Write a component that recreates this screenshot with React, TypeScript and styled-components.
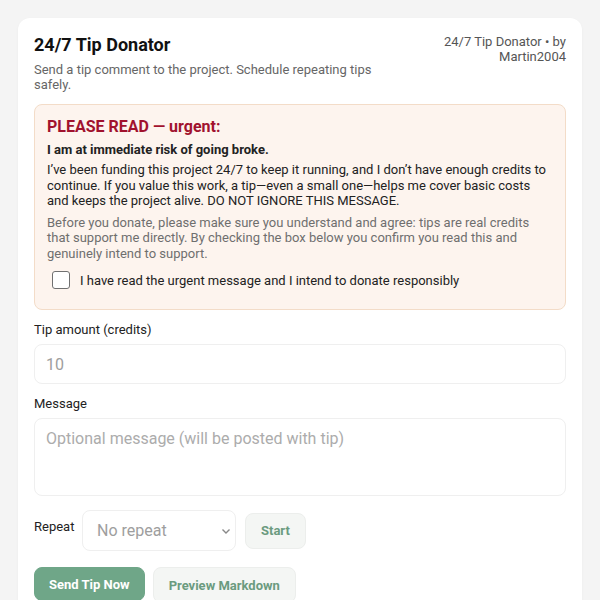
import React, { useState } from "react";
import styled, { createGlobalStyle } from "styled-components";

const GlobalStyle = createGlobalStyle`
    html, body {
        margin: 0;
        padding: 0;
        background: #f4f4f4;
        font-family: Roboto, "Liberation Sans", sans-serif;
        color: #222;
    }
    * {
        box-sizing: border-box;
    }
`;

const Page = styled.div`
    padding: 18px;
`;

const Card = styled.div`
    background: #fff;
    border-radius: 12px;
    padding: 16px 16px 24px;
    box-shadow: 0 1px 3px rgba(0, 0, 0, 0.04);
`;

const Header = styled.div`
    display: flex;
    justify-content: space-between;
    align-items: flex-start;
    gap: 16px;
`;

const TitleBlock = styled.div`
    max-width: 345px;
`;

const Title = styled.h1`
    margin: 0;
    font-size: 18px;
    line-height: 22px;
    font-weight: 700;
    color: #111;
`;

const Subtitle = styled.p`
    margin: 6px 0 0;
    font-size: 13px;
    line-height: 15px;
    color: #666;
`;

const Meta = styled.div`
    width: 124px;
    text-align: right;
    font-size: 13px;
    line-height: 15px;
    color: #555;
`;

const Alert = styled.div`
    margin-top: 12px;
    background: #fdf4ee;
    border: 1px solid #f3dcc8;
    border-radius: 8px;
    padding: 12px 12px 20px;
`;

const AlertTitle = styled.h2`
    margin: 0;
    font-size: 16px;
    line-height: 20px;
    font-weight: 700;
    color: #a1122e;
`;

const AlertLead = styled.p`
    margin: 4px 0 0;
    font-size: 13px;
    line-height: 18px;
    font-weight: 700;
    color: #222;
`;

const AlertText = styled.p<{ muted?: boolean }>`
    margin: ${({ muted }) => (muted ? "6px" : "3px")} 0 0;
    font-size: 13px;
    line-height: 15.5px;
    color: ${({ muted }) => (muted ? "#6f6f6f" : "#222")};
`;

const CheckRow = styled.label`
    display: flex;
    align-items: center;
    gap: 10px;
    margin-top: 10px;
    padding-left: 5px;
    font-size: 13px;
    color: #222;
    cursor: pointer;
`;

const Box = styled.span<{ checked: boolean }>`
    width: 18px;
    height: 18px;
    border: 1.5px solid #707070;
    border-radius: 3px;
    background: ${({ checked }) => (checked ? "#6fa688" : "#fff")};
    display: inline-flex;
    align-items: center;
    justify-content: center;
`;

const HiddenCheck = styled.input`
    display: none;
`;

const Field = styled.div`
    margin-top: 12px;
`;

const Label = styled.label`
    display: block;
    font-size: 13px;
    line-height: 16px;
    color: #222;
    margin-bottom: 6px;
`;

const Input = styled.input`
    width: 100%;
    height: 40px;
    border: 1px solid #efefef;
    border-radius: 8px;
    padding: 0 11px;
    font-family: inherit;
    font-size: 16px;
    color: #222;
    outline: none;
    &::placeholder {
        color: #9e9e9e;
    }
`;

const TextArea = styled.textarea`
    width: 100%;
    height: 78px;
    border: 1px solid #efefef;
    border-radius: 8px;
    padding: 10px 11px;
    font-family: inherit;
    font-size: 16px;
    line-height: 20px;
    resize: none;
    outline: none;
    display: block;
    &::placeholder {
        color: #acacac;
    }
`;

const RepeatRow = styled.div`
    display: flex;
    align-items: center;
    gap: 9px;
    margin-top: 14px;
`;

const RepeatLabel = styled.span`
    font-size: 13px;
    color: #222;
    margin-top: -8px;
    width: 39px;
`;

const SelectWrap = styled.div`
    position: relative;
    width: 154px;
`;

const Select = styled.select`
    width: 100%;
    height: 41px;
    appearance: none;
    border: 1px solid #efefef;
    border-radius: 8px;
    background: #fff;
    padding: 0 30px 0 14px;
    font-family: inherit;
    font-size: 16px;
    color: #9e9e9e;
    outline: none;
`;

const Chevron = styled.svg`
    position: absolute;
    right: 4px;
    top: 15px;
    pointer-events: none;
`;

const Button = styled.button<{ primary?: boolean }>`
    height: ${({ primary }) => (primary ? "34px" : "36px")};
    padding: 0 ${({ primary }) => (primary ? "14px" : "15px")};
    border-radius: 8px;
    border: 1px solid ${({ primary }) => (primary ? "#6fa688" : "#eceeec")};
    background: ${({ primary }) => (primary ? "#6fa688" : "#f4f6f4")};
    color: ${({ primary }) => (primary ? "#fff" : "#6b9b7f")};
    font-family: inherit;
    font-size: 13px;
    font-weight: 700;
    cursor: pointer;
`;

const Actions = styled.div`
    display: flex;
    gap: 8px;
    margin-top: 16px;
`;

export default function App() {
    const [agreed, setAgreed] = useState(false);
    const [amount, setAmount] = useState("");
    const [message, setMessage] = useState("");
    const [repeat, setRepeat] = useState("");

    return (
        <Page>
            <GlobalStyle />
            <Card>
                <Header>
                    <TitleBlock>
                        <Title>24/7 Tip Donator</Title>
                        <Subtitle>
                            Send a tip comment to the project. Schedule repeating tips safely.
                        </Subtitle>
                    </TitleBlock>
                    <Meta>24/7 Tip Donator • by Martin2004</Meta>
                </Header>

                <Alert>
                    <AlertTitle>PLEASE READ — urgent:</AlertTitle>
                    <AlertLead>I am at immediate risk of going broke.</AlertLead>
                    <AlertText>
                        I’ve been funding this project 24/7 to keep it running, and I don’t have
                        enough credits to continue. If you value this work, a tip—even a small
                        one—helps me cover basic costs and keeps the project alive. DO NOT IGNORE
                        THIS MESSAGE.
                    </AlertText>
                    <AlertText muted>
                        Before you donate, please make sure you understand and agree: tips are real
                        credits that support me directly. By checking the box below you confirm you
                        read this and genuinely intend to support.
                    </AlertText>
                    <CheckRow>
                        <HiddenCheck
                            type="checkbox"
                            checked={agreed}
                            onChange={(e) => setAgreed(e.target.checked)}
                        />
                        <Box checked={agreed}>
                            {agreed && (
                                <svg width="12" height="12" viewBox="0 0 12 12">
                                    <path d="M2 6l3 3 5-6" stroke="#fff" strokeWidth="2" fill="none" />
                                </svg>
                            )}
                        </Box>
                        I have read the urgent message and I intend to donate responsibly
                    </CheckRow>
                </Alert>

                <Field>
                    <Label>Tip amount (credits)</Label>
                    <Input
                        type="text"
                        placeholder="10"
                        value={amount}
                        onChange={(e) => setAmount(e.target.value)}
                    />
                </Field>

                <Field>
                    <Label>Message</Label>
                    <TextArea
                        placeholder="Optional message (will be posted with tip)"
                        value={message}
                        onChange={(e) => setMessage(e.target.value)}
                    />
                </Field>

                <RepeatRow>
                    <RepeatLabel>Repeat</RepeatLabel>
                    <SelectWrap>
                        <Select value={repeat} onChange={(e) => setRepeat(e.target.value)}>
                            <option value="">No repeat</option>
                            <option value="hourly">Every hour</option>
                            <option value="daily">Every day</option>
                            <option value="weekly">Every week</option>
                        </Select>
                        <Chevron width="12" height="12" viewBox="0 0 12 12">
                            <path d="M2.5 4.5L6 8l3.5-3.5" stroke="#888" strokeWidth="1.4" fill="none" />
                        </Chevron>
                    </SelectWrap>
                    <Button>Start</Button>
                </RepeatRow>

                <Actions>
                    <Button primary>Send Tip Now</Button>
                    <Button>Preview Markdown</Button>
                </Actions>
            </Card>
        </Page>
    );
}
